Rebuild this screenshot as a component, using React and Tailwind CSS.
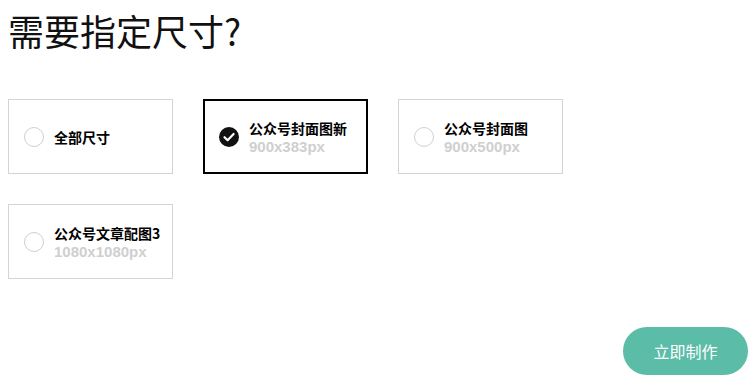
import { useState } from 'react';

const sizes = [
    { id: 'all', name: '全部尺寸' },
    { id: 'cover-new', name: '公众号封面图新', dim: '900x383px' },
    { id: 'cover', name: '公众号封面图', dim: '900x500px' },
    { id: 'article', name: '公众号文章配图3', dim: '1080x1080px' },
];

function CheckIcon() {
    return (
        <svg width="20" height="20" viewBox="0 0 20 20" className="shrink-0">
            <circle cx="10" cy="10" r="10" fill="#111" />
            <path d="M5.5 10.2 L8.6 13.2 L14.6 7" fill="none" stroke="#fff" strokeWidth="2.2" strokeLinecap="round" strokeLinejoin="round" />
        </svg>
    );
}

export default function App() {
    const [selected, setSelected] = useState('cover-new');

    return (
        <div
            className="w-[754px] h-[392px] bg-white relative overflow-hidden"
            style={{ fontFamily: '"Microsoft YaHei", "Noto Sans CJK SC", "Noto Sans", sans-serif' }}
        >
            <h1 className="pl-2 pt-[6px] text-[36px] leading-[48px] font-normal text-[#111]">需要指定尺寸?</h1>

            <div className="flex flex-wrap gap-x-[30px] gap-y-[30px] pl-2 mt-[45px]">
                {sizes.map((s) => {
                    const active = s.id === selected;
                    return (
                        <button
                            key={s.id}
                            onClick={() => setSelected(s.id)}
                            className={`w-[165px] h-[75px] flex items-center text-left bg-white ${
                                active ? 'border-2 border-black pl-[14px]' : 'border border-[#d4d4d4] pl-[15px]'
                            }`}
                        >
                            {active ? (
                                <CheckIcon />
                            ) : (
                                <span className="w-5 h-5 rounded-full border border-[#d0d0d0] shrink-0" />
                            )}
                            <span className="ml-[10px] flex flex-col">
                                <span className="text-[14px] leading-[20px] font-bold text-black whitespace-nowrap">{s.name}</span>
                                {s.dim && (
                                    <span
                                        className="text-[15px] leading-[17px] font-bold text-[#cfcfcf]"
                                        style={{ fontFamily: '"Liberation Sans", Arial, sans-serif' }}
                                    >
                                        {s.dim}
                                    </span>
                                )}
                            </span>
                        </button>
                    );
                })}
            </div>

            <div className="flex justify-end pr-[6px] mt-[48px]">
                <button className="w-[125px] h-[48px] rounded-full bg-[#5bbda8] text-white text-[16px]">
                    立即制作
                </button>
            </div>
        </div>
    );
}
